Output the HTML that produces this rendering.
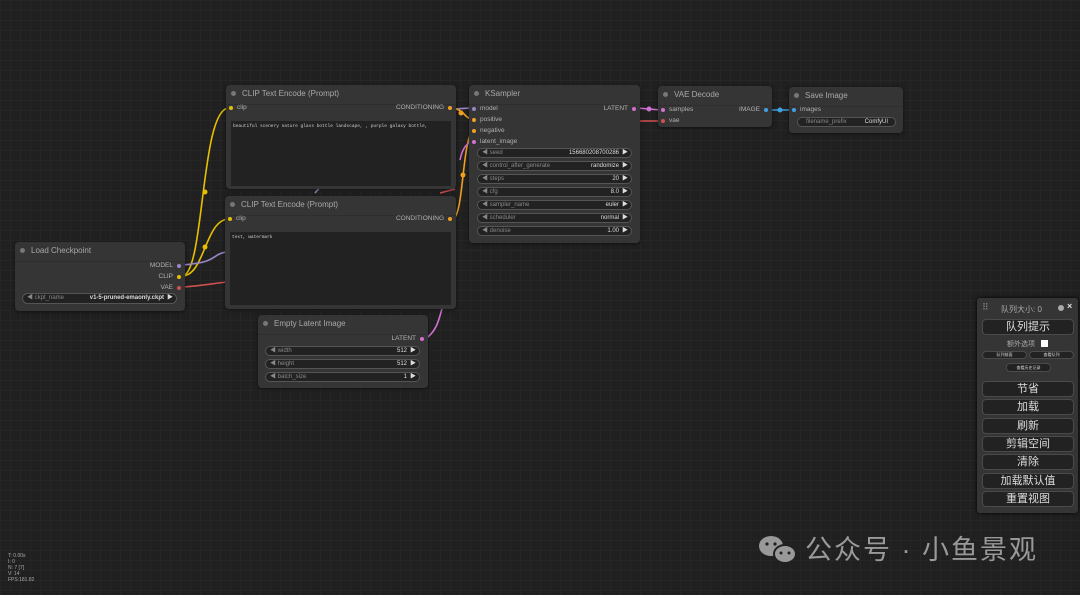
<!DOCTYPE html>
<html><head><meta charset="utf-8"><style>
*{box-sizing:border-box;margin:0;padding:0}
body{width:1080px;height:595px;overflow:hidden;background:#202020;
background-image:linear-gradient(#262626 1px,transparent 1px),linear-gradient(90deg,#262626 1px,transparent 1px);
background-size:10px 10px;font-family:"Liberation Sans","Noto Sans CJK SC",sans-serif;color:#aaa;position:relative}
.n{position:absolute;background:#353535;border-radius:4px;box-shadow:0 1px 4px rgba(0,0,0,.5)}
.t{height:20px;line-height:17px;font-size:8px;color:#a8a8a8;padding-left:16px;position:relative;border-bottom:1px solid #2e2e2e}
.t:before{content:"";position:absolute;left:5px;top:6px;width:5px;height:5px;border-radius:50%;background:#777}
.s{position:absolute;font-size:6.5px;color:#b0b0b0;line-height:8px}
.d{position:absolute;width:4px;height:4px;border-radius:50%}
.w{position:absolute;height:10px;background:#222;border:1px solid #555;border-radius:6px;font-size:6px;line-height:8px;color:#888}
.w .l{position:absolute;left:4px}
.w .v{position:absolute;right:12px;color:#ddd}
.w .r{position:absolute;right:3px;color:#ddd}
.ta{position:absolute;background:#222;font-family:"Liberation Mono",monospace;font-size:4.5px;color:#ccc;padding:3px 2px;line-height:6px;white-space:nowrap;overflow:hidden}
.pb{position:absolute;left:5px;width:92px;height:16px;background:#222;border:1px solid #4a4a4a;border-radius:4px;font-size:11px;color:#ddd;text-align:center;line-height:14px}
</style></head><body>
<svg style="position:absolute;left:0;top:0" width="1080" height="595" fill="none" stroke-width="1.6">
<path d="M182 276 C205 276 200 108 229 108" stroke="#e6c000"/>
<path d="M182 276 C205 276 205 219 229 219" stroke="#e6c000"/>
<path d="M182 265 C220 262 210 255 226 252" stroke="#9a86c8"/>
<path d="M315 193 L322 185" stroke="#9a86c8"/>
<path d="M452 109 C462 109 464 108 472 108" stroke="#9a86c8"/>
<path d="M182 287 C200 286 210 284 226 282" stroke="#d05050"/>
<path d="M440 193 L455 189" stroke="#d05050"/>
<path d="M640 121 C650 121 652 121 661 121" stroke="#d05050"/>
<path d="M453 108 C468 112 462 118 474 119" stroke="#f0a020"/>
<path d="M453 219 C464 215 462 135 474 130" stroke="#f0a020"/>
<path d="M425 339 C440 330 440 310 445 300" stroke="#d070d0"/>
<path d="M460 160 C462 150 466 142 474 141" stroke="#d070d0"/>
<path d="M637 108 L661 110" stroke="#d070d0"/>
<path d="M768 110 L793 110" stroke="#40a0e0"/>
<circle cx="205" cy="192" r="2.5" fill="#e6c000"/><circle cx="205" cy="247" r="2.5" fill="#e6c000"/>
<circle cx="463" cy="175" r="2.5" fill="#f0a020"/><circle cx="461" cy="113" r="2.5" fill="#f0a020"/>
<circle cx="649" cy="109" r="2.5" fill="#d070d0"/><circle cx="780" cy="110" r="2.5" fill="#40a0e0"/>
</svg>

<div class="n" style="left:226px;top:85px;width:230px;height:104px"><div class="t">CLIP Text Encode (Prompt)</div>
<div class="d" style="left:3px;top:21px;background:#e6c000"></div><div class="s" style="left:11px;top:19px">clip</div>
<div class="s" style="right:12px;top:19px">CONDITIONING</div><div class="d" style="right:4px;top:21px;background:#f0a020"></div>
<div class="ta" style="left:5px;top:36px;width:220px;height:65px">beautiful scenery nature glass bottle landscape, , purple galaxy bottle,</div></div>

<div class="n" style="left:225px;top:196px;width:231px;height:113px"><div class="t">CLIP Text Encode (Prompt)</div>
<div class="d" style="left:3px;top:21px;background:#e6c000"></div><div class="s" style="left:11px;top:19px">clip</div>
<div class="s" style="right:12px;top:19px">CONDITIONING</div><div class="d" style="right:4px;top:21px;background:#f0a020"></div>
<div class="ta" style="left:5px;top:36px;width:221px;height:73px">text, watermark</div></div>

<div class="n" style="left:15px;top:242px;width:170px;height:69px"><div class="t">Load Checkpoint</div>
<div class="s" style="right:12px;top:20px">MODEL</div><div class="d" style="right:4px;top:22px;background:#9a86c8"></div>
<div class="s" style="right:12px;top:31px">CLIP</div><div class="d" style="right:4px;top:33px;background:#e6c000"></div>
<div class="s" style="right:12px;top:42px">VAE</div><div class="d" style="right:4px;top:44px;background:#d05050"></div>
<div class="w" style="left:7px;top:51px;width:155px;height:11px"><span class="l">◀ ckpt_name</span><span class="v" style="font-weight:bold">v1-5-pruned-emaonly.ckpt</span><span class="r">▶</span></div></div>

<div class="n" style="left:469px;top:85px;width:171px;height:158px"><div class="t">KSampler</div>
<div class="d" style="left:3px;top:22px;background:#9a86c8"></div><div class="s" style="left:11px;top:20px">model</div>
<div class="d" style="left:3px;top:33px;background:#f0a020"></div><div class="s" style="left:11px;top:31px">positive</div>
<div class="d" style="left:3px;top:44px;background:#f0a020"></div><div class="s" style="left:11px;top:42px">negative</div>
<div class="d" style="left:3px;top:55px;background:#d070d0"></div><div class="s" style="left:11px;top:53px">latent_image</div>
<div class="s" style="right:12px;top:20px">LATENT</div><div class="d" style="right:4px;top:22px;background:#d070d0"></div>
<div class="w" style="left:8px;top:63px;width:155px"><span class="l">◀ seed</span><span class="v">156680208700286</span><span class="r">▶</span></div>
<div class="w" style="left:8px;top:76px;width:155px"><span class="l">◀ control_after_generate</span><span class="v">randomize</span><span class="r">▶</span></div>
<div class="w" style="left:8px;top:89px;width:155px"><span class="l">◀ steps</span><span class="v">20</span><span class="r">▶</span></div>
<div class="w" style="left:8px;top:102px;width:155px"><span class="l">◀ cfg</span><span class="v">8.0</span><span class="r">▶</span></div>
<div class="w" style="left:8px;top:115px;width:155px"><span class="l">◀ sampler_name</span><span class="v">euler</span><span class="r">▶</span></div>
<div class="w" style="left:8px;top:128px;width:155px"><span class="l">◀ scheduler</span><span class="v">normal</span><span class="r">▶</span></div>
<div class="w" style="left:8px;top:141px;width:155px"><span class="l">◀ denoise</span><span class="v">1.00</span><span class="r">▶</span></div></div>

<div class="n" style="left:658px;top:86px;width:114px;height:41px"><div class="t">VAE Decode</div>
<div class="d" style="left:3px;top:22px;background:#d070d0"></div><div class="s" style="left:11px;top:20px">samples</div>
<div class="d" style="left:3px;top:33px;background:#d05050"></div><div class="s" style="left:11px;top:31px">vae</div>
<div class="s" style="right:12px;top:20px">IMAGE</div><div class="d" style="right:4px;top:22px;background:#40a0e0"></div></div>

<div class="n" style="left:789px;top:87px;width:114px;height:46px"><div class="t">Save Image</div>
<div class="d" style="left:3px;top:21px;background:#40a0e0"></div><div class="s" style="left:11px;top:19px">images</div>
<div class="w" style="left:8px;top:30px;width:99px"><span class="l" style="left:8px">filename_prefix</span><span class="v" style="right:7px">ComfyUI</span></div></div>

<div class="n" style="left:258px;top:315px;width:170px;height:73px"><div class="t">Empty Latent Image</div>
<div class="s" style="right:12px;top:20px">LATENT</div><div class="d" style="right:4px;top:22px;background:#d070d0"></div>
<div class="w" style="left:7px;top:31px;width:155px"><span class="l">◀ width</span><span class="v">512</span><span class="r">▶</span></div>
<div class="w" style="left:7px;top:44px;width:155px"><span class="l">◀ height</span><span class="v">512</span><span class="r">▶</span></div>
<div class="w" style="left:7px;top:57px;width:155px"><span class="l">◀ batch_size</span><span class="v">1</span><span class="r">▶</span></div></div>

<div style="position:absolute;left:977px;top:298px;width:101px;height:215px;background:#353535;border-radius:3px;box-shadow:0 0 4px #000">
<div style="position:absolute;left:5px;top:4px;font-size:9px;color:#888">⠿</div>
<div style="position:absolute;left:24px;top:6px;font-size:8px;color:#aaa">队列大小: 0</div>
<div style="position:absolute;left:81px;top:7px;width:6px;height:6px;border-radius:50%;background:#aaa"></div>
<div style="position:absolute;left:90px;top:3px;font-size:9px;color:#ddd;font-weight:bold">×</div>
<div class="pb" style="top:21px">队列提示</div>
<div style="position:absolute;left:30px;top:41px;font-size:7px;color:#aaa">额外选项</div>
<div style="position:absolute;left:64px;top:42px;width:7px;height:7px;background:#fff"></div>
<div class="pb" style="top:53px;width:45px;height:8px;font-size:4px;line-height:6px">队列前面</div>
<div class="pb" style="top:53px;left:52px;width:45px;height:8px;font-size:4px;line-height:6px">查看队列</div>
<div class="pb" style="top:65px;left:29px;width:45px;height:9px;font-size:4px;line-height:7px">查看历史记录</div>
<div class="pb" style="top:83px">节省</div>
<div class="pb" style="top:101px">加载</div>
<div class="pb" style="top:120px">刷新</div>
<div class="pb" style="top:138px">剪辑空间</div>
<div class="pb" style="top:156px">清除</div>
<div class="pb" style="top:175px">加载默认值</div>
<div class="pb" style="top:193px">重置视图</div>
</div>

<div style="position:absolute;left:8px;top:553px;font-size:5px;line-height:6px;color:#aaa">T: 0.00s<br>I: 0<br>N: 7 [7]<br>V: 14<br>FPS:181.82</div>

<svg style="position:absolute;left:757px;top:533px" width="42" height="34"><ellipse cx="14" cy="13" rx="12" ry="10" fill="#999"/><ellipse cx="28" cy="21" rx="11" ry="9" fill="#999" stroke="#202020" stroke-width="2"/><circle cx="10" cy="11" r="1.6" fill="#202020"/><circle cx="18" cy="11" r="1.6" fill="#202020"/><circle cx="24" cy="20" r="1.5" fill="#202020"/><circle cx="32" cy="20" r="1.5" fill="#202020"/></svg>
<div style="position:absolute;left:805px;top:533px;font-size:27px;color:#999;letter-spacing:2px;line-height:34px;white-space:nowrap">公众号 · 小鱼景观</div>
</body></html>
